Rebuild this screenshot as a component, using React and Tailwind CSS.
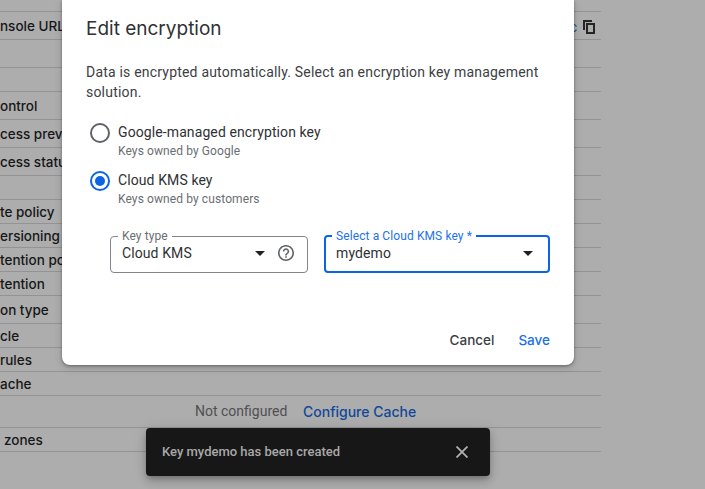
const rows = [
  { h: 'h-[12px]' },
  { h: 'h-[28px]', label: 'nsole URL', copy: true },
  { h: 'h-[28px]' },
  { h: 'h-[24px]' },
  { h: 'h-[28px]', label: 'ontrol' },
  { h: 'h-[28px]', label: 'cess preve' },
  { h: 'h-[28px]', label: 'cess statu' },
  { h: 'h-[24px]' },
  { h: 'h-[24px]', label: 'te policy' },
  { h: 'h-[24px]', label: 'ersioning' },
  { h: 'h-[24px]', label: 'tention po' },
  { h: 'h-[24px]', label: 'tention' },
  { h: 'h-[28px]', label: 'on type' },
  { h: 'h-[24px]', label: 'cle' },
  { h: 'h-[24px]', label: 'rules' },
  { h: 'h-[24px]', label: 'ache' },
  { h: 'h-[32px]', cache: true },
  { h: 'h-[24px]', label: 'zones', pad: true },
];

function Row({ row }) {
  return (
    <div className={`flex items-center border-b border-[#939393] ${row.h}`}>
      {row.label && (
        <span className={`font-['Inter',sans-serif] text-[13.5px] leading-5 font-medium text-[#161718] ${row.pad ? 'pl-1' : ''}`}>
          {row.label}
        </span>
      )}
      {row.copy && (
        <span className="ml-auto flex items-center gap-[5px] pr-[5px] pt-[2px]">
          <span className="text-sm leading-4 text-[#124ea0]">c</span>
          <svg width="14" height="16" viewBox="0 0 14 16" fill="none" stroke="#242527" strokeWidth="2">
            <path d="M2 11V2H10" />
            <path d="M5 5H12V14H5Z" />
          </svg>
        </span>
      )}
      {row.cache && (
        <div className="flex pl-[195px]">
          <span className="w-[108px] text-sm leading-5 text-[#504f52]">Not configured</span>
          <span className="pt-px font-['Inter',sans-serif] text-sm leading-5 font-medium text-[#124799]">Configure Cache</span>
        </div>
      )}
    </div>
  );
}

function Caret() {
  return (
    <svg width="10" height="5" viewBox="0 0 10 5" fill="#202124">
      <path d="M0 0H10L5 5Z" />
    </svg>
  );
}

function Radio({ checked, title, note }) {
  return (
    <div className="flex gap-2">
      <span className={`mt-[3px] flex size-5 items-center justify-center rounded-full border-2 ${checked ? 'border-[#0b63e5]' : 'border-[#5f6368]'}`}>
        {checked && <span className="size-[10px] rounded-full bg-[#0b63e5]" />}
      </span>
      <div>
        <div className="text-sm leading-6 tracking-[0.1px] text-[#303134]">{title}</div>
        <div className="text-xs leading-[14px] tracking-[0.1px] text-[#6a6e73]">{note}</div>
      </div>
    </div>
  );
}

export default function App() {
  return (
    <div className="relative h-[489px] w-[705px] overflow-hidden bg-[#adadad] font-['Roboto',sans-serif]">
      <div className="w-[601px]">
        {rows.map((row, i) => (
          <Row key={i} row={row} />
        ))}
      </div>

      <section className="absolute top-0 left-[62px] h-[365px] w-[512px] rounded-b-lg bg-white px-6 pt-[15px] shadow-[0_1px_3px_rgba(0,0,0,0.35),0_3px_8px_rgba(0,0,0,0.15)]">
        <h1 className="font-['Inter',sans-serif] text-[19px] leading-7 text-[#303134]">Edit encryption</h1>
        <p className="mt-[19px] text-sm leading-5 tracking-[0.2px] text-[#3c4043]">
          Data is encrypted automatically. Select an encryption key management
          <br />
          solution.
        </p>
        <div className="mt-[18px] flex flex-col gap-[10px] pl-1">
          <Radio title="Google-managed encryption key" note="Keys owned by Google" />
          <Radio checked title="Cloud KMS key" note="Keys owned by customers" />
        </div>
        <div className="mt-[24px] flex gap-4 pl-6">
          <fieldset className="h-[43px] w-[198px] rounded-[4px] border border-[#80868b] pr-[13px] pl-[7px]">
            <legend className="h-3 px-1 text-xs leading-3 tracking-[0.1px] text-[#6a6e73]">Key type</legend>
            <div className="flex h-[22px] items-center pl-1">
              <span className="text-sm leading-5 tracking-[0.1px] text-[#303134]">Cloud KMS</span>
              <span className="mr-[13px] ml-auto"><Caret /></span>
              <svg width="16" height="16" viewBox="2 2 20 20" fill="#5f6368">
                <path d="M11 18h2v-2h-2v2zm1-16C6.48 2 2 6.48 2 12s4.48 10 10 10 10-4.48 10-10S17.52 2 12 2zm0 18c-4.41 0-8-3.59-8-8s3.59-8 8-8 8 3.59 8 8-3.59 8-8 8zm0-14c-2.21 0-4 1.79-4 4h2c0-1.1.9-2 2-2s2 .9 2 2c0 2-3 1.75-3 5h2c0-2.25 3-2.5 3-5 0-2.21-1.79-4-4-4z" />
              </svg>
            </div>
          </fieldset>
          <fieldset className="h-[43px] w-[226px] rounded-[4px] border-2 border-[#0b63e5] pr-[15px] pl-[6px]">
            <legend className="h-3 px-1 text-xs leading-3 tracking-[0.1px] text-[#2272e8]">Select a Cloud KMS key *</legend>
            <div className="flex h-[22px] items-center justify-between pl-1">
              <span className="text-sm leading-5 tracking-[0.1px] text-[#303134]">mydemo</span>
              <Caret />
            </div>
          </fieldset>
        </div>
        <div className="mt-[57px] flex justify-end gap-6 pr-[-4px] font-['Inter',sans-serif] text-[13.5px] leading-5 font-medium">
          <button className="text-[#3c4043]">Cancel</button>
          <button className="text-[#1a6fe8]">Save</button>
        </div>
      </section>

      <div className="absolute top-[428px] left-[146px] flex h-12 w-[344px] items-center justify-between rounded bg-[#171717] pr-[22px] pl-4 shadow-[0_3px_5px_-1px_rgba(0,0,0,0.2),0_6px_10px_rgba(0,0,0,0.14),0_1px_14px_rgba(0,0,0,0.1)]">
        <span className="text-[13px] leading-5 font-medium text-[#a9a9a9]">Key mydemo has been created</span>
        <svg width="12" height="12" viewBox="0 0 12 12" stroke="#b0b0b0" strokeWidth="1.8">
          <path d="M.5.5l11 11M11.5.5l-11 11" />
        </svg>
      </div>
    </div>
  );
}
